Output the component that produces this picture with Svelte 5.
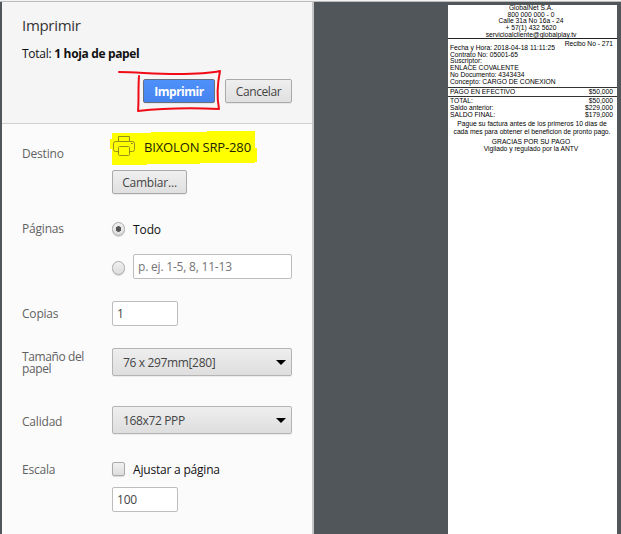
<script>
  let pages = $state('all');
  let fit = $state(false);
  const heading = ['GlobalNet S.A.', '800 000 000 - 0', 'Calle 31a No 16a - 24', '+ 57(1) 432 5620', 'servicioalcliente@globalplay.tv'];
  const details = ['Fecha y Hora: 2018-04-18 11:11:25', 'Contrato No: 05001-65', 'Suscriptor:', 'ENLACE COVALENTE', 'No Documento: 4343434', 'Concepto: CARGO DE CONEXION'];
  const totals = [['TOTAL:', '$50,000'], ['Saldo anterior:', '$229,000'], ['SALDO FINAL:', '$179,000']];
</script>

<div class="window">
  <aside class="panel">
    <header>
      <h1>Imprimir</h1>
      <p class="total">Total: <b>1 hoja de papel</b></p>
      <div class="actions">
        <button class="primary">Imprimir</button>
        <button class="cancel">Cancelar</button>
        <svg class="ink" width="106" height="46" viewBox="0 0 106 46">
          <path d="M2 4 C20 4 36 6 60 6 C76 6 90 6 103 3 C101 13 99 26 102 41 C78 40 48 40 21 43 C22 34 21 20 22 8" />
        </svg>
      </div>
    </header>

    <section class="destination">
      <span class="label">Destino</span>
      <div class="field">
        <div class="printer">
          <svg class="marker" width="147" height="35" viewBox="0 0 147 35">
            <path d="M2 3H41V2H97V1H145V18H147V32H145V33H90V34H37V35H2V19H0V9H2Z" fill="#ff0" />
          </svg>
          <svg class="icon" width="24" height="22" viewBox="0 0 24 22" fill="none" stroke="#929218">
            <path d="M6.5 6.5V1.5H17.5V6.5M6.5 16.5H3.5Q1.5 16.5 1.5 14.5V8.5Q1.5 6.5 3.5 6.5H20.5Q22.5 6.5 22.5 8.5V14.5Q22.5 16.5 20.5 16.5H17.5M6.5 12.5Q6.5 11.5 7.5 11.5H16.5Q17.5 11.5 17.5 12.5V19.5Q17.5 20.5 16.5 20.5H7.5Q6.5 20.5 6.5 19.5Z" />
            <path d="M19 8.5H21" />
          </svg>
          <span class="name">BIXOLON SRP-280</span>
        </div>
        <button class="change">Cambiar...</button>
      </div>
    </section>

    <section class="pages">
      <span class="label">Páginas</span>
      <div class="field">
        <label class="option"><input type="radio" bind:group={pages} value="all" /><span class="todo">Todo</span></label>
        <label class="option range"><input type="radio" bind:group={pages} value="range" /><input class="text" type="text" placeholder="p. ej. 1-5, 8, 11-13" /></label>
      </div>
    </section>

    <section class="copies">
      <span class="label">Copias</span>
      <div class="field"><input class="text small" type="text" value="1" /></div>
    </section>

    <section class="paper">
      <span class="label">Tamaño del<br />papel</span>
      <div class="field"><div class="select"><span>76 x 297mm[280]</span><i></i></div></div>
    </section>

    <section class="quality">
      <span class="label">Calidad</span>
      <div class="field"><div class="select"><span class="dpi">168x72 PPP</span><i></i></div></div>
    </section>

    <section class="scale">
      <span class="label">Escala</span>
      <div class="field">
        <label class="option"><input type="checkbox" bind:checked={fit} /><span class="fit">Ajustar a página</span></label>
        <input class="text small" type="text" value="100" />
      </div>
    </section>
  </aside>

  <main>
    <article>
      <div class="head">{#each heading as line}<div>{line}</div>{/each}</div>
      <div class="info">
        <div>{#each details as line}<div>{line}</div>{/each}</div>
        <div class="number">Recibo No - 271</div>
      </div>
      <div class="row paid"><span>PAGO EN EFECTIVO</span><span>$50,000</span></div>
      {#each totals as [name, amount]}<div class="row"><span>{name}</span><span>{amount}</span></div>{/each}
      <div class="notice"><div class="first">Pague su factura antes de los primeros 10 días de</div><div>cada mes para obtener el beneficion de pronto pago.</div></div>
      <div class="thanks"><div>GRACIAS POR SU PAGO</div><div>Vigilado y regulado por la ANTV</div></div>
    </article>
  </main>
</div>

<style>
  :global(body) { overflow: hidden; background: #f2f2f2; }
  * { box-sizing: border-box; }
  .window {
    height: 534px; display: flex; padding-left: 2px; overflow: hidden;
    background: linear-gradient(#f2f2f2 0 1px, #bcbcbc 1px 2px, #50565a 2px);
    font: 12px/12px "Open Sans", "Noto Sans", sans-serif; letter-spacing: -0.2px;
  }
  .panel { width: 312px; height: 533px; margin-top: 1px; flex: none; background: #fbfbfb; border-top: 1px solid #bcbcbc; border-right: 2px solid #c4c6c7; }
  header { height: 122px; padding: 15px 20px 0; background: #f5f5f5; border-bottom: 1px solid #d0d0d0; }
  h1 { margin: 0; font-size: 15px; line-height: 16px; font-weight: 400; color: #333; letter-spacing: -0.3px; }
  .total { margin: 14px 0 0; line-height: 14px; color: #111; white-space: nowrap; letter-spacing: -0.25px; }
  .total b { letter-spacing: -0.35px; }
  .actions { position: relative; display: flex; justify-content: flex-end; gap: 10px; margin-top: 18px; }
  button { font: inherit; letter-spacing: inherit; padding: 1px 0 0; height: 24px; color: #444; border: 1px solid #aaa; border-radius: 2px; background: linear-gradient(#efefef, #e0e0e0); box-shadow: 0 1px 1px #0001; }
  .primary { width: 72px; color: #fff; font-weight: 700; letter-spacing: -0.5px; border-color: #666f80; background: linear-gradient(#4e91fb, #4683ef); }
  .cancel { width: 67px; letter-spacing: -0.4px; }
  .ink { position: absolute; left: 95px; top: -11px; fill: none; stroke: #f00b16; stroke-width: 2; stroke-linejoin: round; stroke-linecap: round; }
  section { display: flex; padding: 0 20px; color: #444; }
  .label { width: 90px; flex: none; color: #626262; }
  .field { width: 180px; }
  .destination { height: 97px; padding-top: 6px; }
  .destination .label { padding-top: 18px; }
  .printer { position: relative; display: flex; align-items: center; height: 35px; margin-left: -2px; }
  .marker { position: absolute; left: 0; top: 0; }
  .icon { position: relative; margin: -3px 0 0 2px; }
  .name { position: relative; margin: -2px 0 0 8px; color: #221f00; font-size: 13px; letter-spacing: -0.15px; }
  .change { display: block; width: 75px; margin-top: 5px; }
  .pages { height: 80px; padding-top: 1px; }
  .pages .label { padding-top: 1px; }
  .option { display: flex; align-items: center; height: 14px; gap: 8px; color: #111; }
  .todo, .fit { padding-top: 2px; }
  .todo { letter-spacing: -0.1px; }
  .range { height: 25px; margin-top: 18px; }
  input { font: inherit; letter-spacing: inherit; margin: 0; appearance: none; }
  input[type="radio"], input[type="checkbox"] { width: 13px; height: 14px; flex: none; border: 1px solid #aaa; background: linear-gradient(#f0f0f0, #ddd); box-shadow: 0 1px 1px #0002; }
  input[type="radio"] { border-radius: 7px; }
  .range input[type="radio"] { margin-top: 2px; }
  input[type="radio"]:checked { background: radial-gradient(circle, #555 0 2.5px, transparent 3px), linear-gradient(#f0f0f0, #ddd); }
  input[type="checkbox"] { border-radius: 2px; }
  .text { width: 159px; height: 25px; padding: 0 4px; color: #444; background: #fff; border: 1px solid #bdbdbd; border-radius: 2px; }
  .text::placeholder { color: #757575; opacity: 1; }
  .range .text { margin-top: -1px; }
  .small { display: block; width: 66px; }
  .copies { height: 47px; }
  .copies .label { padding-top: 7px; }
  .paper { height: 58px; }
  .paper .label { padding-top: 3px; letter-spacing: -0.4px; }
  .select { display: flex; align-items: center; justify-content: space-between; height: 28px; padding: 0 5px 0 10px; letter-spacing: -0.35px; border: 1px solid #b4b4b4; border-radius: 2px; background: linear-gradient(#eee, #dedede); box-shadow: 0 1px 1px #0001; }
  .select span { padding-top: 2px; }
  .select i { border: solid transparent; border-width: 5px 5px 0; border-top-color: #000; }
  .quality { height: 56px; }
  .quality .label { padding-top: 10px; }
  .scale .label { padding-top: 2px; }
  .scale .small { margin-top: 11px; }
  main { flex: 1; padding: 5px 0 0 134px; }
  article { width: 169px; height: 529px; background: #fff; color: #000; font: 6.7px/6.7px "Liberation Sans", Arial, sans-serif; letter-spacing: 0; white-space: nowrap; }
  .head { height: 34px; text-align: center; border-bottom: 1px solid #222; padding-right: 3px; }
  .info { display: flex; justify-content: space-between; height: 48px; padding: 6px 4px 0 2px; }
  .number { margin-top: -4px; }
  .row { display: flex; justify-content: space-between; padding: 0 4px 0 2px; line-height: 6.8px; }
  .paid { height: 10px; line-height: 8px; border: solid #333; border-width: 1px 0; margin-bottom: 1px; }
  .notice { margin-top: 2px; line-height: 8px; text-align: center; padding-right: 1px; }
  .thanks { margin-top: 3px; text-align: center; padding-right: 3px; }
</style>
